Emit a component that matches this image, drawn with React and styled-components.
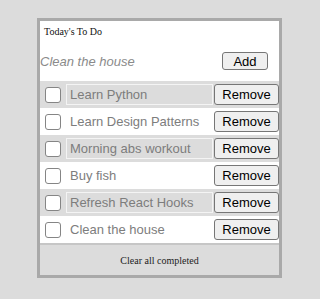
import React from 'react';
import styled, { createGlobalStyle } from 'styled-components';

const GlobalStyle = createGlobalStyle`
  body {
    margin: 8px;
    background: #dcdcdc;
    font-family: "Liberation Sans", Arial, sans-serif;
  }
`;

const Card = styled.div`
  width: 239px;
  margin: 10px 0 0 29px;
  border: 3px solid #a9a9a9;
  background: white;
`;

const Title = styled.div`
  padding: 5px 4px 0;
  height: 12px;
  font-family: "Liberation Serif", "Times New Roman", serif;
  font-size: 10px;
  line-height: 12px;
  color: #111;
`;

const Form = styled.div`
  display: flex;
  align-items: center;
  height: 28px;
  margin-top: 9px;
  padding: 0 11px 6px 0;
`;

const NewInput = styled.input`
  flex: 1;
  min-width: 0;
  border: none;
  outline: none;
  padding: 0;
  background: transparent;
  font-family: "Liberation Sans", Arial, sans-serif;
  font-size: 13px;
  font-style: italic;
  color: #333;

  &::placeholder {
    color: #8a8a8a;
  }
`;

const Button = styled.button`
  box-sizing: border-box;
  width: ${p => p.$w}px;
  height: ${p => p.$h}px;
  padding: 0;
  border: 1px solid #767676;
  border-radius: 3px;
  background: #efefef;
  color: #000;
  font-family: "Liberation Sans", Arial, sans-serif;
  font-size: 13px;
  line-height: 1;
  flex-shrink: 0;
`;

const List = styled.div`
  display: flex;
  flex-direction: column;
`;

const Row = styled.div`
  display: flex;
  align-items: center;
  height: 27px;
  padding-left: 5px;
  background: ${p => (p.$done ? '#dcdcdc' : 'white')};
`;

const Check = styled.input.attrs({ type: 'checkbox' })`
  appearance: none;
  box-sizing: border-box;
  width: 16px;
  height: 16px;
  margin: 0 5px 0 0;
  border: 1px solid #858585;
  border-radius: 3px;
  background: white;
  flex-shrink: 0;
`;

const ItemText = styled.div`
  box-sizing: border-box;
  flex: 1;
  height: 21px;
  margin-right: 1px;
  padding: 0 3px;
  border: 1px solid ${p => (p.$done ? '#f4f4f4' : 'white')};
  font-size: 13px;
  line-height: 19px;
  color: #7d7d7d;
  white-space: nowrap;
  overflow: hidden;
`;

const Footer = styled.div`
  border-top: 2px solid #c6c6c6;
  background: #dcdcdc;
  height: 30px;
  display: flex;
  align-items: center;
  justify-content: center;
  font-family: "Liberation Serif", "Times New Roman", serif;
  font-size: 10px;
  color: #222;
`;

const todos = [
  { text: 'Learn Python', done: true },
  { text: 'Learn Design Patterns', done: false },
  { text: 'Morning abs workout', done: true },
  { text: 'Buy fish', done: false },
  { text: 'Refresh React Hooks', done: true },
  { text: 'Clean the house', done: false },
];

export default function App() {
  return (
    <>
      <GlobalStyle />
      <Card>
        <Title>Today's To Do</Title>
        <Form>
          <NewInput placeholder="Clean the house" />
          <Button $w={46} $h={18}>Add</Button>
        </Form>
        <List>
          {todos.map(todo => (
            <Row key={todo.text} $done={todo.done}>
              <Check />
              <ItemText $done={todo.done}>{todo.text}</ItemText>
              <Button $w={65} $h={21}>Remove</Button>
            </Row>
          ))}
        </List>
        <Footer>Clear all completed</Footer>
      </Card>
    </>
  );
}
